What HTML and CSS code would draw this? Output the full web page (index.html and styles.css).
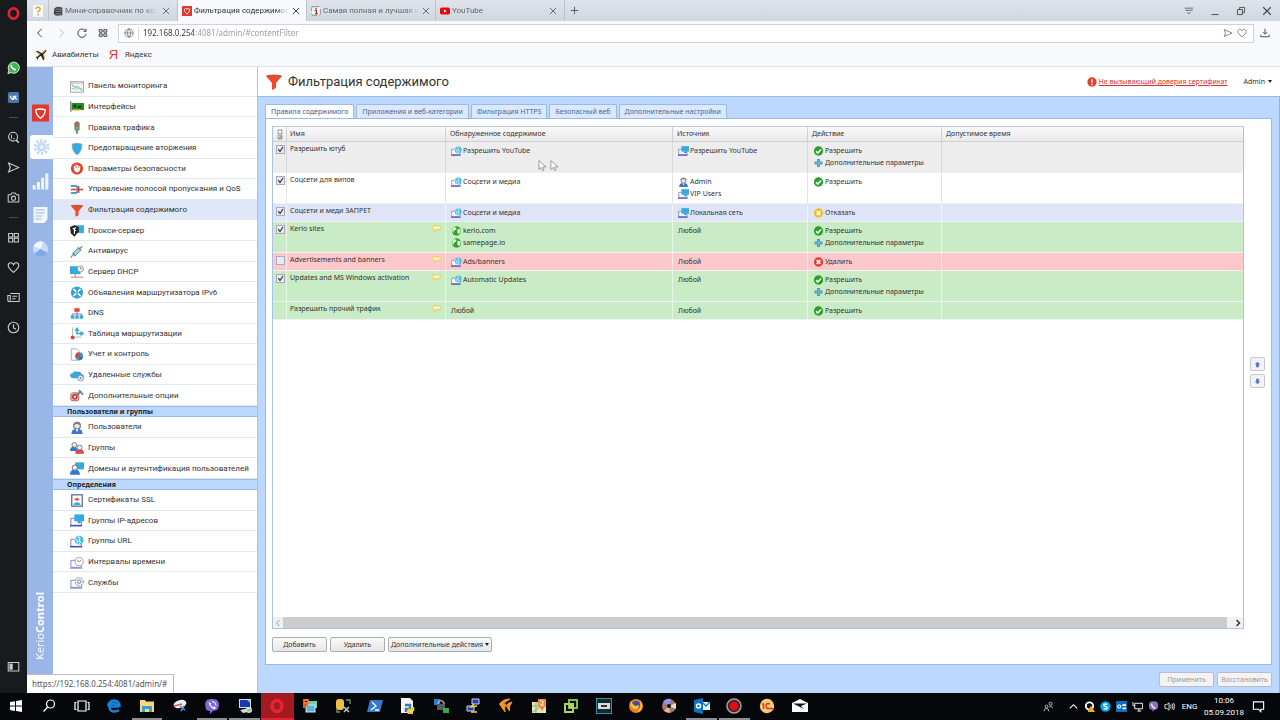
FILE: index.html
```html
<!DOCTYPE html>
<html lang="ru">
<head>
<meta charset="utf-8">
<title>Фильтрация содержимого</title>
<link rel="stylesheet" href="styles.css">
</head>
<body>
<svg class="sprite" aria-hidden="true">
  <symbol id="x" viewBox="0 0 16 16"><path d="M3 3l10 10M13 3L3 13" fill="none" stroke="currentColor" stroke-width="1.5"/></symbol>
  <symbol id="kerio" viewBox="0 0 16 16"><rect width="16" height="16" rx="1" fill="#e1382b"/><path d="M3.500 5Q8 3.500 12.500 5Q12.500 9.500 8 13Q3.500 9.500 3.500 5z" fill="none" stroke="#fff" stroke-width="1.300"/></symbol>
  <symbol id="send" viewBox="0 0 16 16"><path d="M2 2.500L14.500 8L2 13.500L4 8z" fill="none" stroke="currentColor" stroke-width="1.400"/></symbol>
  <symbol id="heart" viewBox="0 0 16 16"><path d="M8 14C3 10 1.500 8 1.500 5.500C1.500 1.500 6.500 1 8 4.500C9.500 1 14.500 1.500 14.500 5.500C14.500 8 13 10 8 14z" fill="none" stroke="currentColor" stroke-width="1.400"/></symbol>
  <symbol id="funnel" viewBox="0 0 18 16"><path d="M1 2L7 9v7l4-2V9l6-7z" fill="#f04a2c"/><ellipse cx="9" cy="2" rx="8" ry="1.500" fill="#c9553a"/></symbol>
  <symbol id="monitor" viewBox="0 0 16 14"><path d="M1 4.500h12v8H1z" fill="#f6f7fd" stroke="#6670c4"/><rect x="5" y="0" width="11" height="8" fill="#35a9e0"/><path d="M9 8h3v2H9z" fill="#2b7fc0"/><path d="M0 13h14" stroke="#3f4cac" stroke-width="1.600"/></symbol>
  <symbol id="urlgroup" viewBox="0 0 16 14"><path d="M1 4.500h12v8H1z" fill="#fff" stroke="#6a73c6"/><circle cx="10.500" cy="5.500" r="5" fill="#4bbce8"/><path d="M9 1.500q3 1 2 3t1 3l-2 3M6 4l3 2-1 3" fill="none" stroke="#e4faff" stroke-width="1.200"/><path d="M0 13h14" stroke="#3f4cac" stroke-width="1.600"/></symbol>
  <symbol id="globe" viewBox="0 0 14 14"><circle cx="7" cy="7" r="6.500" fill="#2fa32b"/><path d="M4 1.500q4 1 2.500 3.500L3 7v3.500L1 7q0-4 3-5.500zM9 4l4 1-1 5-3 1-1-4z" fill="#dff6d8"/></symbol>
  <symbol id="user" viewBox="0 0 14 14"><path d="M1 14Q1 9 5 8.500h4q4 .500 4 5.500z" fill="#3877d3"/><circle cx="7" cy="5" r="3.600" fill="#f3e4d5" stroke="#6e7684" stroke-width="1.200"/><path d="M3.300 4Q7 0 10.700 4" stroke="#737b88" stroke-width="1.800" fill="none"/><path d="M5.500 9L7 12l1.500-3z" fill="#fff"/></symbol>
  <symbol id="ok" viewBox="0 0 14 14"><circle cx="7" cy="7" r="6.500" fill="#24a323"/><path d="M3.500 7.200L6 9.800l4.600-5" fill="none" stroke="#fff" stroke-width="2.200"/></symbol>
  <symbol id="deny" viewBox="0 0 14 14"><circle cx="7" cy="7" r="6.500" fill="#edbd21"/><path d="M4.500 4.500l5 5M9.500 4.500l-5 5" stroke="#fff" stroke-width="2.600"/></symbol>
  <symbol id="drop" viewBox="0 0 14 14"><circle cx="7" cy="7" r="6.500" fill="#e3412f"/><path d="M4.500 4.500l5 5M9.500 4.500l-5 5" stroke="#fff" stroke-width="2.600"/></symbol>
  <symbol id="plus" viewBox="0 0 14 14"><path d="M7 1.500v11M1.500 7h11" stroke="#4c8fb6" stroke-width="4"/><path d="M7 2.500v9M2.500 7h9" stroke="#63b7da" stroke-width="2"/></symbol>
  <symbol id="note" viewBox="0 0 14 12"><path d="M3 1h8q2.500 0 2.500 2.500T11 7H6.500L4 10.500V7H3Q.500 7 .500 4T3 1z" fill="#fdf3a9" stroke="#e0c259"/></symbol>
  <symbol id="cursor" viewBox="0 0 10 13"><path d="M1 1v10l2.500-2.300 1.700 3.600 1.600-.8-1.600-3.400H9z" fill="#fff" stroke="#888" stroke-width=".9"/></symbol>
  <symbol id="gear" viewBox="0 0 20 20"><circle cx="10" cy="10" r="7.500" fill="none" stroke="#c3d5f4" stroke-width="3.500" stroke-dasharray="2.700 2"/><circle cx="10" cy="10" r="5.500" fill="#c8d9f6"/><circle cx="10" cy="10" r="2.200" fill="#eef4fe"/></symbol>
</svg>

<div class="screen">
  <aside class="opera" aria-label="Opera">
    <button class="op-logo" aria-label="Opera"><svg viewBox="0 0 14 14"><ellipse cx="7" cy="7" rx="5" ry="5.500" fill="none" stroke="#e5202f" stroke-width="3"/></svg></button>
    <button aria-label="WhatsApp"><svg viewBox="0 0 14 14"><path d="M1 13.500L2 10A6 6 0 1 1 4.500 12.500z" fill="#3fb451" stroke="#d9f2dc" stroke-width="1"/><path d="M4.800 4.200q-.8 1.600 1.200 3.400t3.500 1.800" stroke="#fff" stroke-width="1.700" fill="none"/></svg></button>
    <button aria-label="VK"><svg viewBox="0 0 14 14"><rect x="1" y="1" width="12" height="12" rx="2" fill="#4a76a8"/><path d="M3.300 5q1.200 4 3.700 4V5M7 7q2 0 3-2M7.500 7q2 .5 3 2.200" fill="none" stroke="#fff" stroke-width="1.400"/></svg></button>
    <hr>
    <button aria-label="Поиск"><svg viewBox="0 0 16 16"><circle cx="7.500" cy="7" r="5.500" fill="none" stroke="currentColor" stroke-width="1.400"/><path d="M11 11l3.500 3.500" fill="none" stroke="currentColor" stroke-width="2"/><path d="M5.500 4.500v5M7.500 9.500h2" fill="none" stroke="currentColor" stroke-width="1.200"/></svg></button>
    <button aria-label="Отправить"><svg><use href="#send"/></svg></button>
    <button aria-label="Снимок"><svg viewBox="0 0 16 16"><path d="M1.500 4.500h3L6 2.500h4l1.500 2h3v9h-13z" fill="none" stroke="currentColor" stroke-width="1.300"/><circle cx="8" cy="8.800" r="2.500" fill="none" stroke="currentColor" stroke-width="1.300"/></svg></button>
    <hr>
    <button aria-label="Экспресс-панель"><svg viewBox="0 0 16 16"><path d="M2 3h5v4.500H2zM9 3h5v4.500H9zM2 9h5v4.500H2zM9 9h5v4.500H9z" fill="none" stroke="currentColor" stroke-width="1.300"/></svg></button>
    <button aria-label="Закладки"><svg><use href="#heart"/></svg></button>
    <button aria-label="Новости"><svg viewBox="0 0 16 16"><path d="M4 3h11v10H2.500Q1 13 1 11V5.500h3V12M6.500 6.500h6M6.500 9.500h4" fill="none" stroke="currentColor" stroke-width="1.300"/></svg></button>
    <button aria-label="История"><svg viewBox="0 0 16 16"><circle cx="8" cy="8" r="6.500" fill="none" stroke="currentColor" stroke-width="1.400"/><path d="M8 4v4.500l3 1.500" fill="none" stroke="currentColor" stroke-width="1.400"/></svg></button>
    <button class="op-last" aria-label="Панель"><svg viewBox="0 0 16 16"><path d="M1.500 3h13v10.500h-13z" fill="none" stroke="currentColor" stroke-width="1.300"/><path d="M3 4.500h4V12H3z" fill="currentColor"/></svg></button>
  </aside>

  <div class="browser">
    <header class="tabstrip">
      <button class="pin" aria-label="Справка"><svg viewBox="0 0 12 14"><rect width="12" height="14" fill="#fafafa"/><path d="M3.500 5q0-2.500 2.500-2.500T8.500 5Q8.500 6.500 6 8v1.200" fill="none" stroke="#e9a321" stroke-width="1.800"/><circle cx="6" cy="11.500" r="1.100" fill="#e9a321"/></svg></button>
      <div class="tab"><svg viewBox="0 0 14 14"><path d="M2 3l4-2 7 1v11l-9 .500-3-3z" fill="#444"/><path d="M3 5l4-1 5 1M4 8l8-1M4 11h8" stroke="#999" fill="none"/></svg><span>Мини-справочник по ко</span><button aria-label="Закрыть"><svg><use href="#x"/></svg></button></div>
      <div class="tab active"><svg><use href="#kerio"/></svg><span>Фильтрация содержимог</span><button aria-label="Закрыть"><svg><use href="#x"/></svg></button></div>
      <div class="tab"><svg viewBox="0 0 14 14"><rect x="1" y="1" width="12" height="12" rx="2" fill="#fff" stroke="#476" stroke-dasharray="9 3"/><path d="M5 6h2.500v5M5.500 11h4" stroke="#c2202c" stroke-width="1.800" fill="none"/><circle cx="7" cy="3.500" r="1.200" fill="#c2202c"/></svg><span>Самая полная и лучшая к</span><button aria-label="Закрыть"><svg><use href="#x"/></svg></button></div>
      <div class="tab"><svg viewBox="0 0 14 14"><rect y="2" width="14" height="10" rx="2.500" fill="#e8050c"/><path d="M5.500 4.800v4.400L9.500 7z" fill="#fff"/></svg><span>YouTube</span><button aria-label="Закрыть"><svg><use href="#x"/></svg></button></div>
      <button class="newtab" aria-label="Новая вкладка"><svg viewBox="0 0 12 12"><path d="M6 1v10M1 6h10" stroke="#555" stroke-width="1.200"/></svg></button>
      <div class="winctl">
        <button aria-label="Меню вкладок"><svg viewBox="0 0 14 14"><path d="M1 3h12M2 6h10M4.500 8.500L7 11l2.500-2.500" fill="none" stroke="currentColor"/></svg></button>
        <button aria-label="Свернуть"><svg viewBox="0 0 14 14"><path d="M2 12h10" stroke="currentColor" stroke-width="1.300"/></svg></button>
        <button aria-label="Развернуть"><svg viewBox="0 0 14 14"><path d="M2 5h7v7H2zM5 5V2h7v7H9" fill="none" stroke="currentColor" stroke-width="1.200"/></svg></button>
        <button aria-label="Закрыть окно"><svg class="big"><use href="#x"/></svg></button>
      </div>
    </header>

    <div class="addressbar">
      <button aria-label="Назад"><svg viewBox="0 0 12 12"><path d="M8 1L3 6l5 5" fill="none" stroke="currentColor" stroke-width="1.200"/></svg></button>
      <button class="dim" aria-label="Вперёд"><svg viewBox="0 0 12 12"><path d="M4 1l5 5-5 5" fill="none" stroke="currentColor" stroke-width="1.200"/></svg></button>
      <button aria-label="Обновить"><svg viewBox="0 0 12 12"><path d="M10.300 3.500A5 5 0 1 0 11 7M10.800 1v3h-3" fill="none" stroke="currentColor" stroke-width="1.200"/></svg></button>
      <button aria-label="Экспресс-панель"><svg viewBox="0 0 12 12"><path d="M1.500 2h3.500v3H1.500zM7 2h3.500v3H7zM1.500 7h3.500v3H1.500zM7 7h3.500v3H7z" fill="none" stroke="currentColor" stroke-width="1.200"/></svg></button>
      <div class="urlbox">
        <svg class="world" viewBox="0 0 12 12"><path d="M6 1a5 5 0 1 0 0 10A5 5 0 1 0 6 1M1 6h10M6 1Q2 6 6 11Q10 6 6 1" fill="none" stroke="#777"/></svg>
        <input type="text" aria-label="Адрес" value="192.168.0.254:4081/admin/#contentFilter">
        <button aria-label="Поделиться"><svg><use href="#send"/></svg></button>
        <button aria-label="В закладки"><svg><use href="#heart"/></svg></button>
      </div>
      <button class="download" aria-label="Загрузки"><svg viewBox="0 0 12 12"><path d="M6 1v6M3.500 5L6 7.500 8.500 5M1 8v2.500h10V8" fill="none" stroke="currentColor" stroke-width="1.100"/></svg></button>
    </div>

    <nav class="bookmarks">
      <a href="#"><svg viewBox="0 0 14 14"><path d="M1 3l2-1 5 3 4-4 1.500 1-3.500 4 1 6-1.500 1-2.500-5-3 2-1 3-.8-2.500L.5 9.500l3-1 2-2z" fill="#222"/><path d="M1 3l5 3M10 6l1 5M12 1L8.500 5" fill="none" stroke="#e7b72c" stroke-width="1.200"/></svg>Авиабилеты</a>
      <a href="#"><b>Я</b>Яндекс</a>
    </nav>

    <div class="page">
      <aside class="rail">
        <button aria-label="Kerio"><svg><use href="#kerio"/></svg></button>
        <button class="on" aria-label="Настройка"><svg><use href="#gear"/></svg></button>
        <button aria-label="Состояние"><svg viewBox="0 0 16 16"><path d="M2 16v-4M6 16V9M10 16V5M14 16V1" stroke="#f0f5ff" stroke-width="2.800"/></svg></button>
        <button aria-label="Журналы"><svg viewBox="0 0 16 18"><path d="M1 1h14v12l-3 4H1z" fill="#f2f6fe"/><path d="M3 4h9M3 7h9M3 10h7M3 13h6" stroke="#9fbbe8"/></svg></button>
        <button aria-label="Отчеты"><svg viewBox="0 0 18 18"><circle cx="9" cy="9" r="8" fill="#c6dafa"/><path d="M9 9L1.500 6A8 8 0 0 1 12 1.500z" fill="#eef5ff"/><path d="M9 9l-6.500 5A8 8 0 0 0 16 13z" fill="#7fa8ea"/></svg></button>
        <div class="brand">Kerio<b>Control</b></div>
      </aside>

      <nav class="menu">
        <ul class="g16">
          <li><a href="#"><svg viewBox="0 0 16 14"><rect x=".5" y="1.500" width="15" height="12" fill="#f5f7f7" stroke="#9aa0a5"/><path d="M2 5l4 3 3-1 5 5" fill="none" stroke="#3fa05b"/><path d="M1 3h14" stroke="#d99" /><path d="M2 9l4 1 8-1" fill="none" stroke="#9bc"/></svg>Панель мониторинга</a></li>
          <li><a href="#"><svg viewBox="0 0 16 14"><path d="M1 1v12" stroke="#777" stroke-width="1.500"/><rect x="2" y="3" width="14" height="8" fill="#268a28"/><path d="M4 5h3v3H4zM9 6h4v3H9z" fill="#123b16"/><path d="M3 11h9" stroke="#e4c531" stroke-width="1.500"/></svg>Интерфейсы</a></li>
          <li><a href="#"><svg viewBox="0 0 16 14"><rect x="5" y="0" width="6" height="11" rx="2.500" fill="#747b80"/><path d="M8 11v3" stroke="#777" stroke-width="2"/><circle cx="8" cy="3" r="2" fill="#d9574f"/><circle cx="8" cy="7.500" r="2" fill="#55c15d"/></svg>Правила трафика</a></li>
          <li><a href="#"><svg viewBox="0 0 16 14"><path d="M2.500 2Q8 0 13.500 2Q14 10 8 14Q2 10 2.500 2z" fill="#2fade9" stroke="#9a9fa5"/></svg>Предотвращение вторжения</a></li>
          <li><a href="#"><svg viewBox="0 0 16 14"><circle cx="8" cy="7" r="7" fill="#dc4436"/><path d="M5 7V4M7 7V2.500M9 7V3M11 7V4.500" stroke="#fff" stroke-width="1.400"/><path d="M4.500 6.500h7q0 5-3.500 5t-3.500-5z" fill="#fff"/></svg>Параметры безопасности</a></li>
          <li><a href="#"><svg viewBox="0 0 16 14"><path d="M1 3h6l3 3M1 11h6l3-3" fill="none" stroke="#43a5ca" stroke-width="2.500"/><path d="M1 7h14" stroke="#dc5145" stroke-width="2"/><path d="M10 3v8" stroke="#a34" stroke-width="1.200"/></svg>Управление полосой пропускания и QoS</a></li>
          <li class="sel"><a href="#" aria-current="page"><svg><use href="#funnel"/></svg>Фильтрация содержимого</a></li>
          <li><a href="#"><svg viewBox="0 0 16 14"><rect x="5" y="1" width="11" height="9" fill="#34afe0"/><path d="M0 3l5-2 5 2v5l-5 6-4-4z" fill="#222"/><path d="M3 5l4-1M5 4v7M5 7h2" stroke="#fff" stroke-width="1.300"/></svg>Прокси-сервер</a></li>
          <li><a href="#"><svg viewBox="0 0 16 14"><path d="M3 9l6-6 3 3-6 6z" fill="#9ed3df" stroke="#85939b"/><path d="M9 2l4 4M11 4l3-3M3 11l-2 3" stroke="#7e898f" stroke-width="1.500"/><path d="M3 9l3 3" stroke="#4c91a8" stroke-width="2"/></svg>Антивирус</a></li>
          <li><a href="#"><svg viewBox="0 0 16 14"><rect x="0" y="1" width="12" height="9" fill="#35aadd"/><path d="M6 10v3" stroke="#777"/><path d="M1 13.500h14" stroke="#d65b52"/><circle cx="12" cy="4" r="3.500" fill="#fff" stroke="#8c9197"/><path d="M12 2v2h2" fill="none" stroke="#777"/></svg>Сервер DHCP</a></li>
          <li><a href="#"><svg viewBox="0 0 16 14"><circle cx="8" cy="7" r="7" fill="#34a4d8"/><path d="M4 3l8 8M12 3l-8 8" stroke="#fff" stroke-width="2"/><circle cx="8" cy="7" r="1.300" fill="#34a4d8"/></svg>Объявления маршрутизатора IPv6</a></li>
          <li><a href="#"><svg viewBox="0 0 16 14"><path d="M8 4v5M2.500 10V7.500h11V10" fill="none" stroke="#778"/><rect x="5" y="1" width="6" height="4" fill="#de4337"/><path d="M1 9h4v4H1zM6 9h4v4H6zM11 9h4v4h-4z" fill="#38a9dc"/></svg>DNS</a></li>
          <li><a href="#"><svg viewBox="0 0 16 14"><path d="M3 0v11h10" fill="none" stroke="#a5abaf"/><circle cx="3" cy="11.500" r="2.300" fill="#cf443b"/><path d="M8 8V3M6 4l2-3 2 3M8 7h6M12 5l3 2-3 2" fill="none" stroke="#3fa9d8" stroke-width="1.800"/></svg>Таблица маршрутизации</a></li>
          <li><a href="#"><svg viewBox="0 0 16 14"><path d="M1.500.5h6l3 3v10h-9z" fill="#fff" stroke="#a1a6ab"/><circle cx="10.500" cy="9" r="4.500" fill="#3798cc"/><path d="M10.500 9V4.500a4.500 4.500 0 0 0-4 6z" fill="#dc4338"/><path d="M10.500 9l4 2a4.500 4.500 0 0 1-4 2.500z" fill="#666"/></svg>Учет и контроль</a></li>
          <li><a href="#"><svg viewBox="0 0 16 14"><path d="M3 10Q0 9.500 0 7t3-2.500Q5 1 8 3q4-1.500 5 2 3 .5 3 3t-3 2z" fill="#3ca6dc"/><circle cx="12" cy="10" r="3.300" fill="#e8edf0" stroke="#80929f"/><circle cx="12" cy="10" r="1" fill="#678"/></svg>Удаленные службы</a></li>
          <li><a href="#"><svg viewBox="0 0 16 14"><rect x="1" y="4" width="9" height="9" rx="2" fill="#e7d6d4" stroke="#b2443e"/><circle cx="5.500" cy="8.500" r="2.500" fill="none" stroke="#c93b35" stroke-width="1.800"/><path d="M7 7l6-5M10 1l5 5" stroke="#737a80" stroke-width="2"/></svg>Дополнительные опции</a></li>
        </ul>
        <h2>Пользователи и группы</h2>
        <ul class="g3">
          <li><a href="#"><svg><use href="#user"/></svg>Пользователи</a></li>
          <li><a href="#"><svg viewBox="0 0 16 14"><path d="M0 11q0-5 4-5t5 5z" fill="#3975cc"/><circle cx="5" cy="4" r="2.800" fill="#eee" stroke="#6e7684"/><path d="M6 14q0-5 5-5t5 5z" fill="#d9493e"/><circle cx="11" cy="7" r="2.800" fill="#eee" stroke="#6e7684"/></svg>Группы</a></li>
          <li><a href="#"><svg viewBox="0 0 16 14"><rect x="6" y="0" width="10" height="8" fill="#34a9df"/><path d="M0 14q0-6 5.500-6t6 6z" fill="#3475ce"/><circle cx="5.500" cy="6" r="3" fill="#eee" stroke="#667"/></svg>Домены и аутентификация пользователей</a></li>
        </ul>
        <h2>Определения</h2>
        <ul class="g5">
          <li><a href="#"><svg viewBox="0 0 16 14"><rect x="2" y=".5" width="12" height="13" fill="#fff" stroke="#5e6f98" stroke-width="1.500"/><path d="M4 5h3l1-2 1 2h3l-3 2H7z" fill="#dc3e32"/><path d="M4 12q0-3 4-3t4 3z" fill="#39b0da"/></svg>Сертификаты SSL</a></li>
          <li><a href="#"><svg><use href="#monitor"/></svg>Группы IP-адресов</a></li>
          <li><a href="#"><svg><use href="#urlgroup"/></svg>Группы URL</a></li>
          <li><a href="#"><svg viewBox="0 0 16 14"><path d="M1 4.500h12v8H1zM0 13.500h14" fill="none" stroke="#747ac7"/><circle cx="10.500" cy="6" r="4.700" fill="#fff" stroke="#999ead"/><path d="M8 4l2.500 2.500L13 4" fill="none" stroke="#d25048"/></svg>Интервалы времени</a></li>
          <li><a href="#"><svg viewBox="0 0 16 14"><path d="M1 4.500h12v8H1zM0 13.500h14" fill="none" stroke="#747ac7"/><circle cx="10.500" cy="6" r="4.700" fill="#f1f3f6" stroke="#6d7890" stroke-dasharray="2 1"/><circle cx="10.500" cy="6" r="2" fill="none" stroke="#6d7890"/></svg>Службы</a></li>
        </ul>
      </nav>

      <main class="content">
        <header class="titlebar">
          <svg><use href="#funnel"/></svg>
          <h1>Фильтрация содержимого</h1>
          <a class="cert" href="#"><svg viewBox="0 0 14 14"><circle cx="7" cy="7" r="6.500" fill="#e13f2e"/><path d="M7 3v5M7 9.500v2" stroke="#fff" stroke-width="2"/></svg><span>Не вызывающий доверия сертификат</span></a>
          <button class="admin">Admin <i class="caret"></i></button>
        </header>
        <section class="work">
          <div class="tabs" role="tablist">
            <button role="tab" aria-selected="true">Правила содержимого</button>
            <button role="tab">Приложения и веб-категории</button>
            <button role="tab">Фильтрация HTTPS</button>
            <button role="tab">Безопасный веб</button>
            <button role="tab">Дополнительные настройки</button>
          </div>
          <div class="panel">
            <div class="gridrow">
              <div class="grid">
                <table>
                  <colgroup><col class="c-chk"><col class="c-name"><col class="c-cont"><col class="c-src"><col class="c-act"><col></colgroup>
                  <thead><tr>
                    <th><svg class="hdr" viewBox="0 0 8 14"><path d="M1.500 1h5v5h-5zM1.500 8h5v5h-5z" fill="#fff" stroke="#777"/><path d="M3 10l1 2 2-3" fill="none" stroke="#444"/></svg></th>
                    <th>Имя</th><th>Обнаруженное содержимое</th><th>Источник</th><th>Действие</th><th>Допустимое время</th>
                  </tr></thead>
                  <tbody>
                    <tr class="tall grey">
                      <td><input type="checkbox" id="r1" checked></td><td><label for="r1">Разрешить ютуб</label></td>
                      <td><div><svg><use href="#urlgroup"/></svg>Разрешить YouTube</div></td>
                      <td><div><svg><use href="#monitor"/></svg>Разрешить YouTube</div></td>
                      <td><div><svg><use href="#ok"/></svg>Разрешить</div><div><svg><use href="#plus"/></svg>Дополнительные параметры</div></td><td></td>
                    </tr>
                    <tr class="tall white">
                      <td><input type="checkbox" id="r2" checked></td><td><label for="r2">Соцсети для випов</label></td>
                      <td><div><svg><use href="#urlgroup"/></svg>Соцсети и медиа</div></td>
                      <td><div><svg><use href="#user"/></svg>Admin</div><div><svg><use href="#monitor"/></svg>VIP Users</div></td>
                      <td><div><svg><use href="#ok"/></svg>Разрешить</div></td><td></td>
                    </tr>
                    <tr class="blue">
                      <td><input type="checkbox" id="r3" checked></td><td><label for="r3">Соцсети и меди ЗАПРЕТ</label></td>
                      <td><div><svg><use href="#urlgroup"/></svg>Соцсети и медиа</div></td>
                      <td><div><svg><use href="#monitor"/></svg>Локальная сеть</div></td>
                      <td><div><svg><use href="#deny"/></svg>Отказать</div></td><td></td>
                    </tr>
                    <tr class="tall green">
                      <td><input type="checkbox" id="r4" checked></td><td><label for="r4">Kerio sites</label><svg class="note"><use href="#note"/></svg></td>
                      <td><div><svg><use href="#globe"/></svg>kerio.com</div><div><svg><use href="#globe"/></svg>samepage.io</div></td>
                      <td><div>Любой</div></td>
                      <td><div><svg><use href="#ok"/></svg>Разрешить</div><div><svg><use href="#plus"/></svg>Дополнительные параметры</div></td><td></td>
                    </tr>
                    <tr class="red">
                      <td><input type="checkbox" id="r5"></td><td><label for="r5">Advertisements and banners</label><svg class="note"><use href="#note"/></svg></td>
                      <td><div><svg><use href="#urlgroup"/></svg>Ads/banners</div></td>
                      <td><div>Любой</div></td>
                      <td><div><svg><use href="#drop"/></svg>Удалить</div></td><td></td>
                    </tr>
                    <tr class="tall green">
                      <td><input type="checkbox" id="r6" checked></td><td><label for="r6">Updates and MS Windows activation</label><svg class="note"><use href="#note"/></svg></td>
                      <td><div><svg><use href="#urlgroup"/></svg>Automatic Updates</div></td>
                      <td><div>Любой</div></td>
                      <td><div><svg><use href="#ok"/></svg>Разрешить</div><div><svg><use href="#plus"/></svg>Дополнительные параметры</div></td><td></td>
                    </tr>
                    <tr class="green">
                      <td></td><td><span>Разрешить прочий трафик</span><svg class="note"><use href="#note"/></svg></td>
                      <td><div>Любой</div></td>
                      <td><div>Любой</div></td>
                      <td><div><svg><use href="#ok"/></svg>Разрешить</div></td><td></td>
                    </tr>
                  </tbody>
                </table>
                <div class="hscroll"><button aria-label="Влево"><svg viewBox="0 0 8 8"><path d="M5.500 1l-3 3 3 3" fill="none" stroke="#999"/></svg></button><span></span><button aria-label="Вправо"><svg viewBox="0 0 8 8"><path d="M2.500 1l3 3-3 3" fill="none" stroke="#333" stroke-width="1.500"/></svg></button></div>
              </div>
              <div class="movers">
                <button aria-label="Вверх"><svg viewBox="0 0 10 10"><path d="M5 1l4 4H7v4H3V5H1z" fill="#5878ce"/></svg></button>
                <button aria-label="Вниз"><svg viewBox="0 0 10 10"><path d="M5 9l4-4H7V1H3v4H1z" fill="#5878ce"/></svg></button>
              </div>
            </div>
            <div class="actions">
              <button class="btn">Добавить</button><button class="btn">Удалить</button><button class="btn wide">Дополнительные действия <i class="caret"></i></button>
            </div>
          </div>
          <footer class="apply">
            <button class="btn" disabled>Применить</button><button class="btn" disabled>Восстановить</button>
          </footer>
        </section>
      </main>
    </div>
    <div class="status">https://192.168.0.254:4081/admin/#</div>
  </div>
</div>

<footer class="taskbar">
  <div class="apps">
    <button aria-label="Пуск"><svg viewBox="0 0 16 16"><path d="M2 4l5-.8V7.600H2zM8 3l6-.9v5.500H8zM2 8.500h5v4.400l-5-.8zM8 8.500h6V14l-6-.9z" fill="#fff"/></svg></button>
    <button aria-label="Поиск"><svg viewBox="0 0 16 16"><circle cx="9.500" cy="6" r="4" fill="none" stroke="#fff" stroke-width="1.200"/><path d="M6.700 9L2.500 13.500" stroke="#fff" stroke-width="1.200"/></svg></button>
    <button aria-label="Представление задач"><svg viewBox="0 0 16 16"><path d="M4 3h8v10H4zM2.500 4.500H1v7h1.500M13.500 4.500H15v7h-1.500" fill="none" stroke="#fff" stroke-width="1.200"/></svg></button>
    <button aria-label="Edge"><svg viewBox="0 0 16 16"><path d="M2 8.500h9.500Q11 5.500 8 5.500 3.500 5.500 3.500 9.500q.5 4 5 4 2.500 0 4.500-1.200M2 8q1-5 6-5.500 5.500.3 5.700 6.500" fill="none" stroke="#1683d8" stroke-width="2.300"/></svg></button>
    <button class="run" aria-label="Проводник"><svg viewBox="0 0 16 16"><path d="M1 2h5l1 1.500h8V14H1z" fill="#f6d87c"/><path d="M3 14V8h10v6h-3v-3H6v3z" fill="#3a9fd4"/></svg></button>
    <button aria-label="Ножницы"><svg viewBox="0 0 16 16"><ellipse cx="8" cy="6" rx="6.500" ry="4" transform="rotate(-15 8 6)" fill="#eee"/><path d="M2 8l8-2" stroke="#d55" stroke-width="1.500"/><path d="M8 8l5 4M12 8l-3 5" stroke="#4a9bd4" stroke-width="1.500"/></svg></button>
    <button class="run" aria-label="Viber"><svg viewBox="0 0 16 16"><path d="M3 2q5-2 10 0 2 1.500 2 5t-2 5l-4 1-3 3v-3Q3 12.500 2 11.500.500 7 1.500 4z" fill="#8369d8"/><path d="M5 4q-1 2 2 5t4 2l1-1.500-2-1-1 .5Q7 8 6.500 6.500l.5-1z" fill="#fff"/><path d="M8 3.500q4 0 4 4" fill="none" stroke="#fff"/></svg></button>
    <button class="run" aria-label="Удалённый рабочий стол"><svg viewBox="0 0 16 16"><path d="M2 1h12v9H2z" fill="#d6dce7"/><path d="M3 2h10v7H3z" fill="#1938b5"/><path d="M10 2l3 3V2z" fill="#7aacf7"/><path d="M3 12l9-2 3 3-9 2z" fill="#d5d9de"/><circle cx="12" cy="12" r="3" fill="#c8e3cd"/><path d="M10.500 12l1 1 2-2" fill="none" stroke="#349044"/></svg></button>
    <button class="run hot" aria-label="Opera"><svg viewBox="0 0 16 16"><ellipse cx="8" cy="8" rx="5" ry="5.500" fill="none" stroke="#e62530" stroke-width="3.500"/></svg></button>
    <button aria-label="Radmin"><svg viewBox="0 0 16 16"><rect x="6" y="3" width="9" height="7" fill="#68cfa7"/><rect x="4" y="7" width="9" height="7" fill="#51b7e1" stroke="#d6e6ee"/><path d="M2 10V2h4v3H2M4 5l2 4" fill="none" stroke="#f07335" stroke-width="1.800"/></svg></button>
    <button aria-label="База данных"><svg viewBox="0 0 16 16"><rect x="1" y="1" width="8" height="11" rx="3" fill="#efbd43"/><path d="M11 2h4v4M2 11v3h3" fill="none" stroke="#6f9c6a" stroke-width="1.300"/><path d="M9 9l5 5M14 9l-5 5" fill="none" stroke="#b9c6bd" stroke-width="1.600"/></svg></button>
    <button aria-label="PowerShell"><svg viewBox="0 0 16 16"><path d="M3 2h13l-3 12H0z" fill="#3978c8"/><path d="M5 4l4 4-5 4M8 12h4" fill="none" stroke="#fff" stroke-width="1.300"/></svg></button>
    <button aria-label="Python"><svg viewBox="0 0 16 16"><path d="M1 0h9l3 3v12H1z" fill="#f4f4f4"/><path d="M5 7h5v4H6v3" fill="none" stroke="#397bb0" stroke-width="2.500"/><path d="M13 9v3h-4v3h4" fill="none" stroke="#f5ca3c" stroke-width="2.500"/></svg></button>
    <button aria-label="VPN"><svg viewBox="0 0 16 16"><path d="M1 1h6v6H1z" fill="#267ed2"/><path d="M5 7V5q3-5 6 0v2" fill="none" stroke="#aaa" stroke-width="1.500"/><path d="M4 6h8v6H4z" fill="#555b61"/><path d="M10 10h6v5h-6z" fill="#31ad48"/></svg></button>
    <button aria-label="PuTTY"><svg viewBox="0 0 16 16"><path d="M7 1h7v5H7zM2 8h7v5H2z" fill="#2340bd" stroke="#d0d5dc"/><path d="M6 14h6M12 8L6 9l3-3" fill="none" stroke="#edda3e" stroke-width="1.500"/></svg></button>
    <button aria-label="FAR"><svg viewBox="0 0 16 16"><path d="M12 1Q5 1 1.500 6L7 14Q6 9 8 6 6 6 4.500 7 8 3 12 1zM14 4Q9 5 8.500 8l3 5Q10.500 8 14 4z" fill="#f7952c" stroke="#f7952c"/></svg></button>
    <button aria-label="2ГИС"><svg viewBox="0 0 16 16"><path d="M1 4h14v11H1z" fill="#e7e3bf"/><path d="M1 8h14M5 4v11M2 14l11-8" stroke="#76ba68"/><path d="M7 1h8v6l-4 6-4-6z" fill="#ed8a36"/><path d="M9 3q4-1 3 2L9.500 7H13" fill="none" stroke="#fff"/></svg></button>
    <button aria-label="vSphere"><svg viewBox="0 0 16 16"><path d="M6 2h8v8H6z" fill="none" stroke="#7fbd3f" stroke-width="2"/><path d="M2 6h8v8H2z" fill="none" stroke="#a9d161" stroke-width="2"/><path d="M6 7h3v3H6z" fill="#e9bf42"/></svg></button>
    <button aria-label="Медиа"><svg viewBox="0 0 16 16"><rect x=".5" y=".5" width="15" height="15" fill="#172930" stroke="#358fa5"/><path d="M2 5h12v6H2z" fill="#d6dbdc"/><path d="M5 7h6v2H5z" fill="#333"/></svg></button>
    <button aria-label="Firefox"><svg viewBox="0 0 16 16"><circle cx="8" cy="8" r="7" fill="#f17928"/><circle cx="8" cy="7" r="4" fill="#384cae"/><path d="M3 2q0 4 5 6l3-1q0 5-5 4-5-2-3-9zM12 2q4 5 1 10-2 2-4 2 5-5 3-12z" fill="#ffc42f"/></svg></button>
    <button aria-label="Диск"><svg viewBox="0 0 16 16"><circle cx="8" cy="8" r="7" fill="#a5796c"/><path d="M8 8L2 4q3-4 8-3z" fill="#8c95f3"/><path d="M8 8l7-3v6z" fill="#e7ddd7"/><path d="M8 8L3 13l6 2z" fill="#e8ba98"/><circle cx="8" cy="8" r="2" fill="#111"/></svg></button>
    <button class="run" aria-label="Outlook"><svg viewBox="0 0 16 16"><path d="M0 2l9-2v16l-9-2z" fill="#0f70bc"/><circle cx="4.500" cy="8" r="2" fill="none" stroke="#fff" stroke-width="1.500"/><path d="M9 4h7v8H9z" fill="#e4f1fb"/><path d="M9 5l3 3 4-4" fill="none" stroke="#1678c4" stroke-width="1.300"/></svg></button>
    <button class="run" aria-label="Запись"><svg viewBox="0 0 16 16"><circle cx="8" cy="8" r="7" fill="#392628" stroke="#a4a4a4" stroke-width="1.500"/><circle cx="8" cy="8" r="4.500" fill="#e10b16"/></svg></button>
    <button aria-label="1С"><svg viewBox="0 0 16 16"><circle cx="8" cy="8" r="7.200" fill="#f7ca73"/><path d="M3 6h1.500v5M11 6Q7 4.500 7 8q0 3 3 2.500h4" fill="none" stroke="#d93a24" stroke-width="1.500"/></svg></button>
    <button aria-label="Почта"><svg viewBox="0 0 16 16"><path d="M0 5l8-4 8 4v9H0z" fill="#fff"/><path d="M1 5.500h14L9 8l3 3-4-2z" fill="#111"/></svg></button>
  </div>
  <div class="tray">
    <button class="people" aria-label="Люди"><svg viewBox="0 0 16 16"><circle cx="5" cy="8" r="2" fill="none" stroke="#fff"/><path d="M1.500 15q0-4 3.500-4t3.500 4" fill="none" stroke="#fff"/><circle cx="11" cy="4" r="2.200" fill="none" stroke="#fff"/><path d="M8.500 9q3-3 6 1.500" fill="none" stroke="#fff"/></svg></button>
    <button aria-label="Скрытые значки"><svg viewBox="0 0 12 12"><path d="M2 8l4-4 4 4" fill="none" stroke="#fff" stroke-width="1.200"/></svg></button>
    <button aria-label="Предупреждение"><svg viewBox="0 0 12 12"><circle cx="6" cy="5.500" r="4" fill="none" stroke="#fff" stroke-width="2"/><path d="M7.500 5L12 12H4z" fill="#f4a81d"/></svg></button>
    <button aria-label="Skype"><svg viewBox="0 0 12 12"><circle cx="6" cy="6" r="5.600" fill="#00a8e8"/><path d="M8 3.800Q4 2.500 4 4.500q0 1 2 1.300t2 1.500q0 2-4 1" fill="none" stroke="#fff" stroke-width="1.400"/></svg></button>
    <button aria-label="Outlook"><svg viewBox="0 0 12 12"><rect width="12" height="12" fill="#0c6ebc"/><circle cx="3.500" cy="6" r="1.700" fill="none" stroke="#fff" stroke-width="1.200"/><path d="M7 3.500h4v2H7zM7 7h4v2H7z" fill="#fff"/></svg></button>
    <button aria-label="Сеть"><svg viewBox="0 0 12 12"><path d="M3 2.500h8.500v6H3zM6 11h4M7.500 8.500V11M1 1v4h2" fill="none" stroke="#fff"/></svg></button>
    <button aria-label="Viber"><svg viewBox="0 0 12 12"><path d="M2 1q4-1.500 8 0 2 4 0 8l-3 .5L5 12V9.500L2 9Q0 5 2 1z" fill="#8b72b7"/><path d="M4 3q0 4 4 5" fill="none" stroke="#fff" stroke-width="1.300"/></svg></button>
    <button aria-label="Громкость"><svg viewBox="0 0 12 12"><path d="M1 4h2l2.500-2v8L3 8H1zM7 4q1.500 2 0 4M8.800 3q2 3 0 6M10.500 2q2 4 0 8" fill="none" stroke="#fff" stroke-width=".9"/></svg></button>
    <button class="lang">ENG</button>
    <button class="clock"><span>10:06</span><span>05.09.2018</span></button>
    <button class="bell" aria-label="Уведомления"><svg viewBox="0 0 14 14"><path d="M1.500 2h11v8H9.500v2.500L7 10H1.500z" fill="none" stroke="#fff" stroke-width="1.200"/></svg></button>
  </div>
</footer>
<svg class="pointer p1"><use href="#cursor"/></svg>
<svg class="pointer p2"><use href="#cursor"/></svg>
</body>
</html>
```
FILE: styles.css
```css
* { box-sizing: border-box; }
body {
  margin: 0; height: 100vh; display: flex; flex-direction: column; overflow: hidden;
  font: 8px/12px "Noto Sans", sans-serif; color: #333; background: #fff;
}
button { font: inherit; color: inherit; background: none; border: 0; padding: 0; margin: 0; display: flex; align-items: center; justify-content: center; }
a { color: inherit; text-decoration: none; }
ul { list-style: none; margin: 0; padding: 0; }
svg { display: block; flex: none; }
.sprite { position: absolute; width: 0; height: 0; }
.caret { border: 2px solid transparent; border-top: 3px solid #222; border-bottom: 0; margin-left: 3px; }

.screen { flex: 1; display: flex; min-height: 0; }

.opera { width: 27px; background: #171b1e; color: #c9cccd; display: flex; flex-direction: column; align-items: center; }
.opera button { width: 27px; height: 30px; }
.opera svg { width: 13px; height: 13px; }
.opera .op-logo { height: 27px; margin-bottom: 25px; }
.opera .op-last { margin-top: auto; margin-bottom: 12px; }
.opera hr { width: 9px; border: 0; border-top: 1px solid #4a4e50; margin: 5px 0 4px; }

.browser { flex: 1; min-width: 0; display: flex; flex-direction: column; position: relative; }

.tabstrip { height: 21px; display: flex; align-items: stretch; background: linear-gradient(#dfe4ea, #d0d7e0); color: #666; }
.pin { width: 21px; }
.pin svg { width: 10px; height: 12px; }
.tab { width: 129px; display: flex; align-items: center; gap: 2px; padding: 0 5px 0 4px; border-left: 1px solid #bcc3cb; }
.tab > svg { width: 10px; height: 10px; }
.tab span { flex: 1; white-space: nowrap; font: 8px/12px Roboto, sans-serif; mask-image: linear-gradient(90deg, #000 85%, transparent); }
.tab button { width: 12px; }
.tab button svg { width: 10px; height: 10px; }
.tab.active { background: #f8f9fc; color: #333; }
.newtab { width: 20px; border-left: 1px solid #bcc3cb; }
.newtab svg { width: 9px; height: 9px; }
.winctl { margin-left: auto; display: flex; color: #444; }
.winctl button { width: 26px; }
.winctl svg { width: 10px; height: 10px; }
.winctl .big { width: 12px; height: 12px; }

.addressbar { height: 24px; display: flex; align-items: center; background: #f8f9fc; padding: 0 4px 0 2px; color: #444; }
.addressbar button { width: 21px; height: 18px; }
.addressbar svg { width: 10px; height: 10px; }
.addressbar .dim { color: #bbb; }
.urlbox { flex: 1; height: 19px; margin-left: 5px; display: flex; align-items: center; background: #fff; border: 1px solid #cfd2d6; padding: 0 4px; }
.urlbox input {
  flex: 1; min-width: 0; border: 0; outline: 0; padding: 0 0 0 4px; margin-left: 4px; height: 12px;
  border-left: 1px solid #ddd; font: 8px/12px "Noto Sans", sans-serif; color: #777;
  -webkit-text-fill-color: transparent; background: linear-gradient(90deg, #333 55px, #999 55px) text;
}
.urlbox button { width: 14px; color: #777; }
.urlbox .world { margin-left: 1px; }
.addressbar .download { width: 22px; }

.bookmarks { height: 22px; display: flex; align-items: center; gap: 10px; padding: 0 8px 1px; background: #f8f9fc; border-bottom: 1px solid #dfe0e3; font-family: Roboto, sans-serif; }
.bookmarks a { display: flex; align-items: center; gap: 5px; }
.bookmarks svg { width: 12px; height: 12px; }
.bookmarks b { font: 13px/14px "Liberation Sans", sans-serif; color: #ea3526; width: 10px; margin-right: 1px; }

.page { flex: 1; min-height: 0; display: flex; }

.rail { width: 26px; background: #99b6e6; display: flex; flex-direction: column; padding-top: 29px; }
.rail button { height: 34px; }
.rail svg { width: 17px; height: 18px; }
.rail .on { height: 24px; margin: 5px 0 5px 3px; background: #fff; border-radius: 3px 0 0 3px; }
.brand { writing-mode: vertical-rl; transform: rotate(180deg); align-self: center; margin: auto 0 33px; font: 11px/14px "Open Sans", sans-serif; color: #fff; }

.menu { width: 205px; padding-top: 9px; border-right: 1px solid #a8c4ee; background: #fff; }
.menu ul { display: grid; grid-auto-rows: 1fr; }
.g16 { height: 330px; }
.g3 { height: 62px; }
.g5 { height: 103px; }
.menu li { border-bottom: 1px solid #e1e8f2; }
.menu li.sel { background: #e0e8f8; }
.menu a { height: 100%; display: flex; align-items: center; gap: 4px; padding: 1px 0 0 17px; white-space: nowrap; font-family: Roboto, sans-serif; }
.menu svg { width: 14px; height: 13px; }
.menu h2 { margin: 0; height: 11px; padding-left: 14px; font: bold 7px/9px "Noto Sans", sans-serif; color: #222; background: #bdd8ff; border: solid #99bbe8; border-width: 1px 0; }

.content { flex: 1; min-width: 0; display: flex; flex-direction: column; }
.titlebar { height: 30px; display: flex; align-items: center; padding: 0 8px 0 7px; border-bottom: 1px solid #99bbe8; background: #fff; }
.titlebar > svg { width: 18px; height: 16px; }
.titlebar h1 { margin: 0 auto 0 5px; font: 13px/20px Roboto, sans-serif; color: #333; }
.cert { display: flex; align-items: center; gap: 2px; color: #d2322d; font-size: 7px; margin-right: 16px; text-decoration: underline; }
.cert svg { width: 10px; height: 10px; }
.admin { font-size: 7px; }

.work { flex: 1; min-height: 0; display: flex; flex-direction: column; background: #bdd8ff; padding: 7px 7px 6px; border-right: 1px solid #8fb2e6; }
.tabs { display: flex; gap: 2px; font-size: 7px; color: #48689c; }
.tabs button { height: 14px; padding: 0 5px; background: #dce9fd; border: 1px solid #99bbe8; border-bottom: 0; border-radius: 2px 2px 0 0; }
.tabs [aria-selected] { background: #fff; color: #3d6097; margin-bottom: -1px; z-index: 1; }
.panel { flex: 1; min-height: 0; display: flex; flex-direction: column; background: #fff; border: 1px solid #99bbe8; padding: 7px 6px 12px; }
.gridrow { flex: 1; min-height: 0; display: flex; gap: 6px; }
.grid { flex: 1; min-width: 0; display: flex; flex-direction: column; border: 1px solid #a9c3e8; border-top-color: #c5ccd8; }
.movers { width: 15px; display: flex; flex-direction: column; justify-content: center; gap: 3px; padding-bottom: 10px; }
.movers button { height: 14px; border: 1px solid #c6c8cf; border-radius: 2px; background: #f3f3f5; }
.movers svg { width: 7px; height: 7px; }

table { width: 100%; table-layout: fixed; border-collapse: separate; border-spacing: 0; font-size: 7px; line-height: 12px; }
.c-chk { width: 14px; }
.c-name { width: 159px; }
.c-cont { width: 227px; }
.c-src { width: 135px; }
.c-act { width: 134px; }
th { height: 15px; padding: 0 4px; text-align: left; font-weight: normal; background: linear-gradient(#fafafa, #e9e9ec); border-right: 1px solid #d0d0d4; border-bottom: 1px solid #d0d0d4; }
th:nth-child(2) { padding-left: 3px; }
.hdr { width: 6px; height: 11px; }
td { height: 18px; padding: 3px 0 2px 5px; vertical-align: top; border-right: 1px solid rgba(255,255,255,.55); border-bottom: 1px solid #eef1f6; white-space: nowrap; }
td:nth-child(1) { padding: 3px 0 0 3px; }
td:nth-child(2) { padding: 1px 4px 0 3px; display: flex; justify-content: space-between; height: 18px; }
th:last-child, td:last-child { border-right: 0; }
.tall td, .tall td:nth-child(2) { height: 31px; }
.grey td { background: #ededed; border-right-color: #d9d9d9; }
.white td { border-right-color: #e4e4e4; }
.blue td { background: #dfe5f6; }
.green td { background: #c9ebc5; }
.red td { background: #fdc8c9; }
td div { display: flex; align-items: center; gap: 1px; }
td svg { width: 11px; height: 10px; }
td .note { width: 9px; height: 8px; margin-top: 2px; }
td input { appearance: none; display: block; margin: 0; width: 9px; height: 9px; border: 1px solid #aab; background: #e9eaf2; }
td input:checked { background: #e9eaf2 url("data:image/svg+xml,%3Csvg xmlns='http://www.w3.org/2000/svg' viewBox='0 0 7 7'%3E%3Cpath d='M1.200 3.200L3 5.500L6 1' fill='none' stroke='%23334' stroke-width='1.200'/%3E%3C/svg%3E") center / 7px 7px no-repeat; }
.hscroll { margin-top: auto; height: 11px; display: flex; background: #f1f1f1; }
.hscroll span { flex: 1; background: #cdcdcd; }
.hscroll button { width: 10px; }
.hscroll button:last-child { width: 16px; padding-left: 6px; }
.hscroll svg { width: 8px; height: 8px; }

.actions { display: flex; gap: 3px; margin-top: 8px; }
.btn { min-width: 55px; height: 15px; padding: 0 3px; font-size: 7px; border: 1px solid #adadb0; border-radius: 2px; background: linear-gradient(#fafafa, #e6e6e8); }
.btn.wide { padding: 0 2px; }
.wide .caret { margin-left: 2px; }
.btn:disabled { color: #999; background: #f3f3f5; border-color: #b7bdc9; }
.apply { display: flex; justify-content: flex-end; gap: 3px; margin-top: 7px; }

.status { position: absolute; left: 0; bottom: 0; height: 19px; padding: 0 6px 0 5px; line-height: 18px; color: #555; background: #fff; border: 1px solid #bbb; border-width: 1px 1px 0 0; }

.taskbar { height: 27px; display: flex; justify-content: space-between; background: #06070b; color: #fff; }
.apps { width: 816px; display: flex; }
.apps button { flex: 1; border-bottom: 2px solid transparent; }
.apps svg { width: 16px; height: 16px; }
.apps .run { border-image: linear-gradient(90deg, transparent 10%, #8d8f93 10% 90%, transparent 90%) 2; }
.apps .hot { background: #a51a20; border-image: none; border-bottom-color: #e4242c; }
.tray { display: flex; padding-right: 10px; font-family: Roboto, sans-serif; }
.tray button { width: 16px; }
.tray svg { width: 11px; height: 11px; }
.tray .people { width: 24px; margin-right: 5px; }
.tray .lang { width: 25px; }
.tray .clock { width: 44px; flex-direction: column; line-height: 12px; }
.tray .bell { width: 24px; }
.tray .bell svg { width: 13px; height: 13px; }

.pointer { position: absolute; width: 9px; height: 13px; top: 159px; }
.p1 { left: 538px; }
.p2 { left: 550px; }
```
